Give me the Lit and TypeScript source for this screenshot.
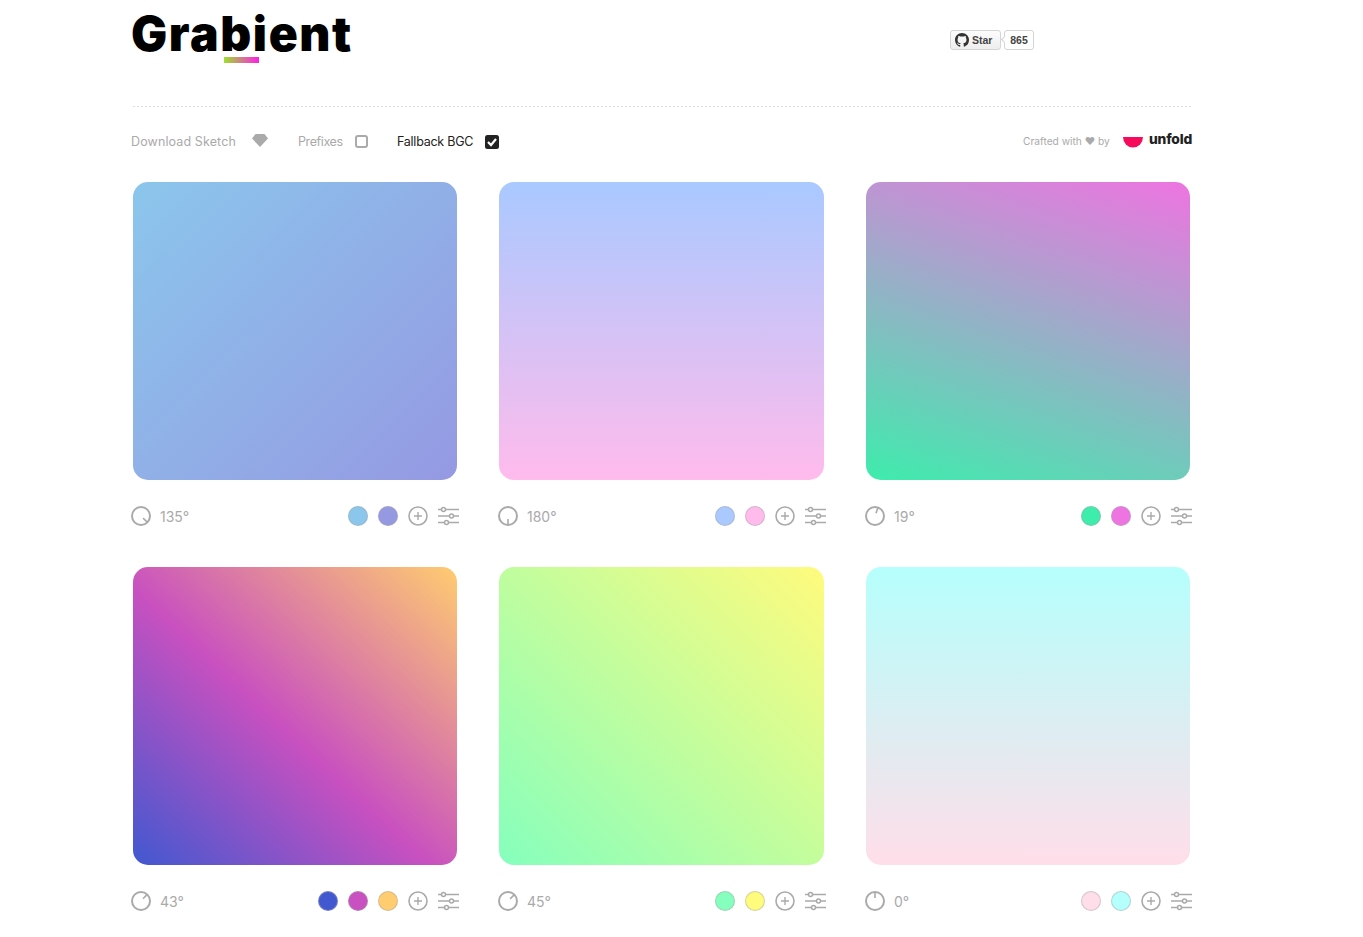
import { LitElement, html, css, svg } from "lit";
import { customElement } from "lit/decorators.js";

interface Card { angle: number; colors: string[]; stops?: string[] }

const CARDS: Card[] = [
  { angle: 135, colors: ["#8BC6EC", "#9599E2"] },
  { angle: 180, colors: ["#A9C9FF", "#FFBBEC"] },
  { angle: 19, colors: ["#3EECAC", "#EE74E1"] },
  { angle: 43, colors: ["#4158D0", "#C850C0", "#FFCC70"], stops: ["0%", "46%", "100%"] },
  { angle: 45, colors: ["#85FFBD", "#FFFB7D"] },
  { angle: 0, colors: ["#FFDEE9", "#B5FFFC"] },
];

@customElement("app-root")
export class AppRoot extends LitElement {
  static styles = css`
    :host { display: block; font-family: "Inter", "Open Sans", sans-serif; color: #aaa; background: #fff; }
    .page { width: 1061px; margin-left: 131px; display: flex; flex-direction: column; }
    .header { height: 106px; display: flex; align-items: flex-start; }
    .brand { flex: none; width: 221px; display: flex; flex-direction: column; padding-top: 5px; }
    .logo { font-family: "Inter", sans-serif; font-weight: 900; font-size: 48px; line-height: 57px; letter-spacing: 1.6px; color: #000; white-space: nowrap; }
    .bar { width: 35px; height: 6px; margin: -5px 0 0 93px; background: linear-gradient(90deg, #9fe02a, #ff1fe6); }
    .gh { display: flex; gap: 3px; margin: 30px 0 0 598px; font: bold 10.5px "Liberation Sans", Arial, sans-serif; color: #444; }
    .gh-btn, .gh-count { height: 20px; box-sizing: border-box; border: 1px solid #d5d5d5; border-radius: 3px; display: flex; align-items: center; }
    .gh-btn { width: 51px; padding-left: 4px; gap: 3px; background: linear-gradient(#fcfcfc, #eee); }
    .gh-count { width: 30px; justify-content: center; background: #fff; position: relative; }
    .gh-count::before { content: ""; position: absolute; left: -3px; top: 6px; width: 4px; height: 4px; background: #fff; border-left: 1px solid #d5d5d5; border-bottom: 1px solid #d5d5d5; transform: rotate(45deg); }
    .rule { height: 1px; margin-left: 2px; background: repeating-linear-gradient(90deg, #ddd 0 2px, transparent 2px 4px); }
    .toolbar { height: 69px; display: flex; align-items: center; font-size: 12.5px; white-space: nowrap; }
    .tool { display: flex; align-items: center; }
    .t1 { width: 105px; letter-spacing: 0.12px; }
    .gem { margin-left: 16px; display: block; margin-top: -2px; }
    .t2 { margin-left: 30px; width: 45px; letter-spacing: -0.4px; }
    .box { width: 13px; height: 13px; box-sizing: border-box; border: 2px solid #aaa; border-radius: 3px; margin-left: 12px; }
    .t3 { margin-left: 29px; width: 77px; color: #222; letter-spacing: -0.25px; }
    .check { display: block; margin-left: 11px; }
    .credit { margin-left: auto; display: flex; align-items: center; font-size: 10.2px; }
    .credit-text { width: 87px; white-space: nowrap; margin-top: -1px; }
    .bowl { display: block; margin: 1px 0 0 13px; }
    .unfold { margin: -5px 0 0 6px; font-weight: 800; font-size: 13.8px; color: #222; letter-spacing: -0.2px; width: 43px; }
    .grid { margin-top: 6px; display: grid; grid-template-columns: 328px 329px 328px; column-gap: 38px; row-gap: 15px; }
    .cell { display: flex; flex-direction: column; }
    .panel { height: 298px; margin: 0 2px; border-radius: 15px; box-shadow: 0 0 0 1px rgba(255,255,255,.6); }
    .row { height: 72px; display: flex; align-items: center; }
    .cell:nth-child(3n+2) .row { padding: 0 0.5px 0 1px; }
    .cell:nth-child(3n) .row { padding-left: 1px; }
    .dial { display: block; }
    .deg { margin-left: 9px; font-size: 14px; }
    .tools { margin-left: auto; display: flex; align-items: center; gap: 10px; }
    .dot { width: 20px; height: 20px; border-radius: 50%; box-sizing: border-box; border: 1.5px solid rgba(170,170,170,.5); background-clip: border-box; }
    .ic { display: block; }
  `;

  private dial(angle: number) {
    const r = (angle * Math.PI) / 180;
    const x = 10 + 9 * Math.sin(r);
    const y = 10 - 9 * Math.cos(r);
    const sx = 10 + 3 * Math.sin(r);
    const sy = 10 - 3 * Math.cos(r);
    return html`<svg class="dial" width="20" height="20" viewBox="0 0 20 20" fill="none" stroke="#aaa" stroke-width="2">
      <circle cx="10" cy="10" r="9"></circle>
      ${svg`<line x1=${sx.toFixed(2)} y1=${sy.toFixed(2)} x2=${x.toFixed(2)} y2=${y.toFixed(2)} stroke-width="1.6"></line>`}
    </svg>`;
  }

  private card(c: Card) {
    const stops = c.colors.map((col, i) => (c.stops ? `${col} ${c.stops[i]}` : col)).join(", ");
    return html`<div class="cell">
      <div class="panel" style="background: linear-gradient(${c.angle}deg, ${stops})"></div>
      <div class="row">
        ${this.dial(c.angle)}
        <span class="deg">${c.angle}°</span>
        <div class="tools">
          ${c.colors.map((col) => html`<div class="dot" style="background-color: ${col}"></div>`)}
          <svg class="ic" width="20" height="20" viewBox="0 0 20 20" fill="none" stroke="#aaa">
            <circle cx="10" cy="10" r="9" stroke-width="1.6"></circle>
            <path d="M10 6v8M6 10h8" stroke-width="1.4"></path>
          </svg>
          <svg class="ic" width="21" height="20" viewBox="0 0 21 20" fill="none" stroke="#aaa" stroke-width="1.5">
            <path d="M0 3.5h3.5M7.5 3.5H21M0 10h11.500M15.500 10H21M0 16.500h6.500M10.500 16.500H21"></path>
            <circle cx="5.500" cy="3.500" r="2"></circle>
            <circle cx="13.500" cy="10" r="2"></circle>
            <circle cx="8.500" cy="16.500" r="2"></circle>
          </svg>
        </div>
      </div>
    </div>`;
  }

  render() {
    return html`<div class="page">
      <header class="header">
        <div class="brand">
          <div class="logo">Grabient</div>
          <div class="bar"></div>
        </div>
        <div class="gh">
          <div class="gh-btn">
            <svg width="14" height="14" viewBox="0 0 16 16" fill="#333"><path d="M8 0C3.58 0 0 3.58 0 8c0 3.540 2.290 6.530 5.470 7.590.4.070.55-.170.55-.380 0-.190-.010-.820-.010-1.490-2.010.370-2.530-.490-2.690-.940-.090-.230-.480-.940-.820-1.130-.280-.150-.680-.520-.010-.530.630-.010 1.080.580 1.230.820.720 1.210 1.870.870 2.330.660.070-.520.280-.870.510-1.070-1.780-.200-3.640-.890-3.640-3.950 0-.870.310-1.590.820-2.150-.080-.200-.360-1.020.080-2.120 0 0 .670-.210 2.200.820.640-.180 1.320-.270 2-.270s1.360.090 2 .270c1.530-1.040 2.200-.820 2.200-.820.440 1.100.160 1.920.080 2.120.510.560.820 1.270.820 2.150 0 3.070-1.870 3.750-3.650 3.950.290.250.540.730.540 1.480 0 1.070-.010 1.930-.010 2.200 0 .210.150.460.550.380A8.010 8.010 0 0016 8c0-4.420-3.580-8-8-8z"></path></svg>
            <span>Star</span>
          </div>
          <div class="gh-count">865</div>
        </div>
      </header>
      <div class="rule"></div>
      <div class="toolbar">
        <div class="tool t1">Download Sketch</div>
        <svg class="gem" width="16" height="13" viewBox="0 0 16 13" fill="#aaa"><path d="M3.500 0h9L16 4.500 8 13 0 4.500z"></path></svg>
        <div class="tool t2">Prefixes</div>
        <div class="box"></div>
        <div class="tool t3">Fallback BGC</div>
        <svg class="check" width="14" height="14" viewBox="0 0 14 14"><rect width="14" height="14" rx="2.500" fill="#222"></rect><path d="M3 7l3 3 5-6" fill="none" stroke="#fff" stroke-width="2.200"></path></svg>
        <div class="credit">
          <span class="credit-text">Crafted with ♥ by</span>
          <svg class="bowl" width="20" height="11" viewBox="0 0 20 11"><path d="M0 0h20a10 10.500 0 01-20 0z" fill="#f50a5c"></path></svg>
          <span class="unfold">unfold</span>
        </div>
      </div>
      <div class="grid">${CARDS.map((c) => this.card(c))}</div>
    </div>`;
  }
}
